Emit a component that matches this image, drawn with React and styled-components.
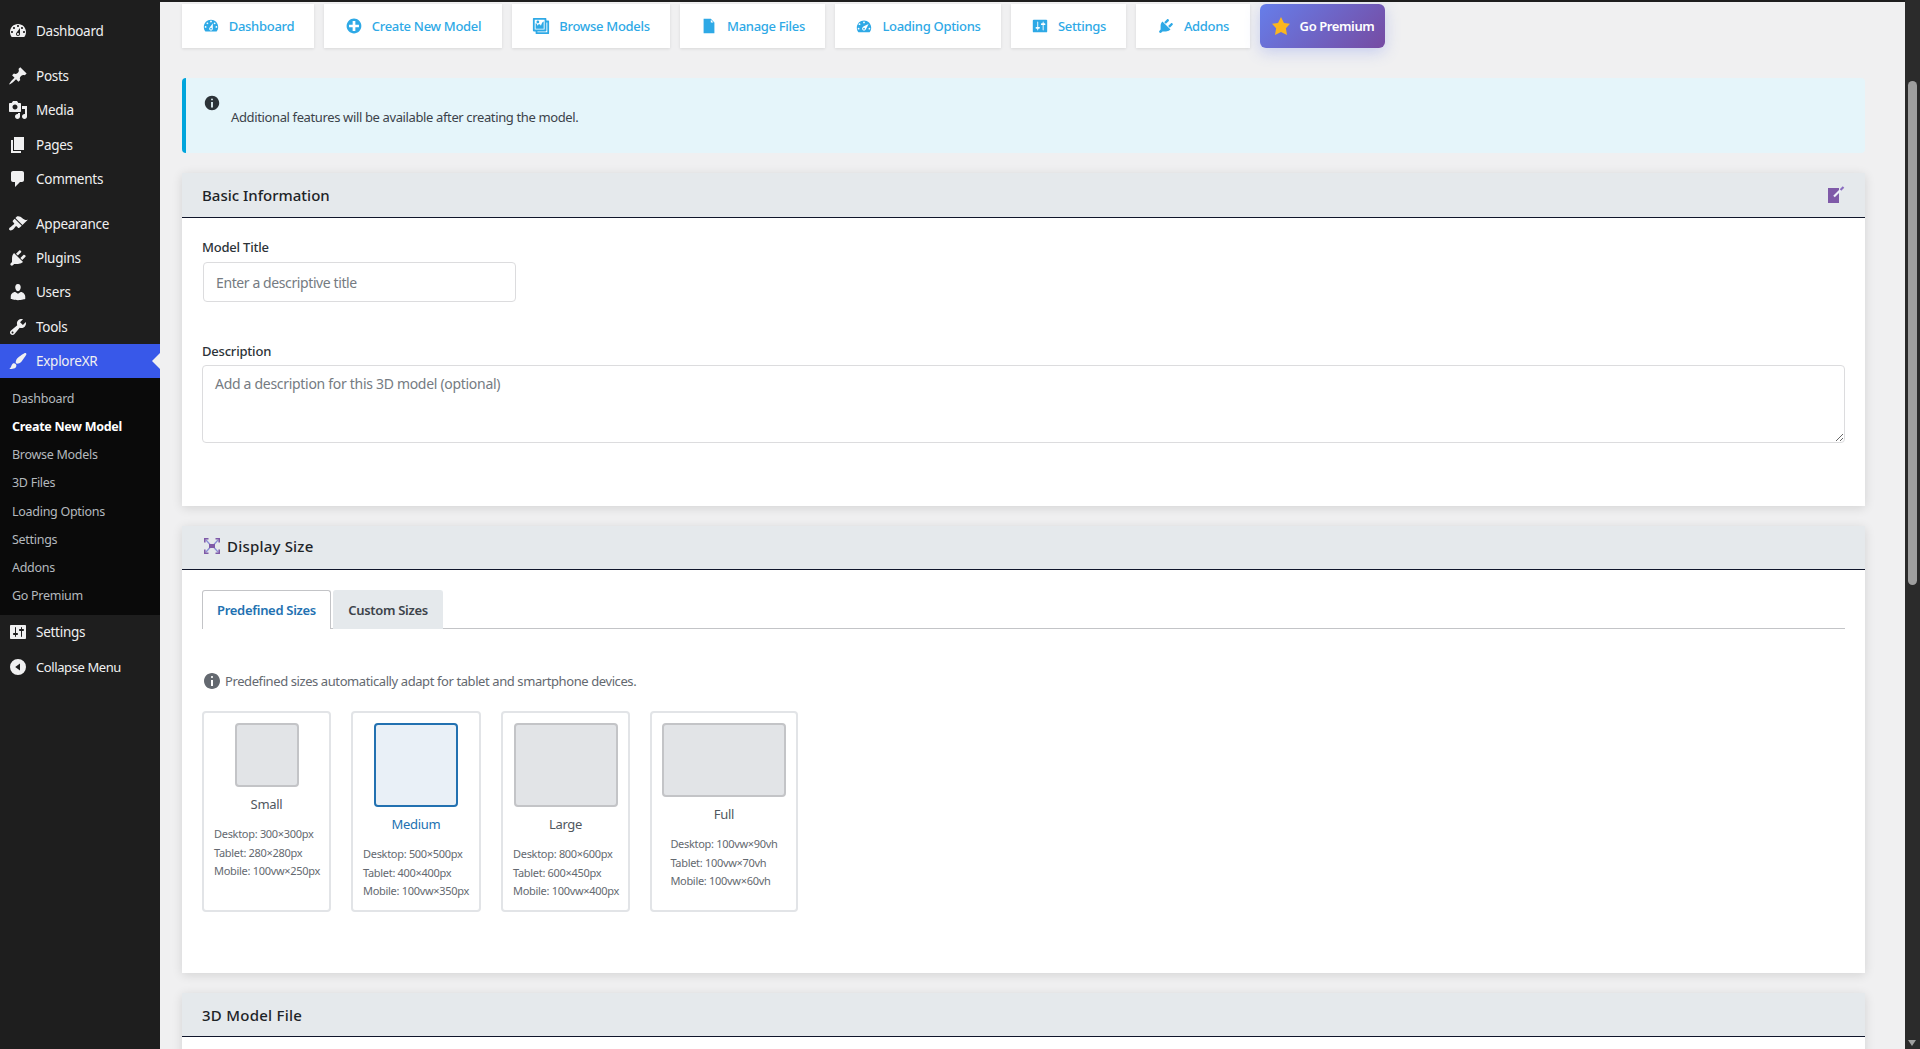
import styled, { createGlobalStyle } from 'styled-components'

const Global = createGlobalStyle`
    html, body {
        margin: 0;
        padding: 0;
        height: 100%;
        overflow: hidden;
        background: #f0f0f1;
    }

    * {
        box-sizing: border-box;
    }

    body {
        font-family: "Noto Sans", "Open Sans", sans-serif;
        font-size: 13px;
        color: #3c434a;
    }
`

/* dashicons, drawn on a 20x20 box */
const paths = {
    dashboard: 'M3.76 16h12.48c1.1-1.37 1.76-3.11 1.76-5 0-4.42-3.58-8-8-8s-8 3.58-8 8c0 1.89.66 3.63 1.76 5zM10 4c.55 0 1 .45 1 1s-.45 1-1 1-1-.45-1-1 .45-1 1-1zM6 6c.55 0 1 .45 1 1s-.45 1-1 1-1-.45-1-1 .45-1 1-1zm8 0c.55 0 1 .45 1 1s-.45 1-1 1-1-.45-1-1 .45-1 1-1zm-5.37 5.55L12 7v6c0 1.1-.9 2-2 2s-2-.9-2-2c0-.57.24-1.08.63-1.45zM4 10c.55 0 1 .45 1 1s-.45 1-1 1-1-.45-1-1 .45-1 1-1zm12 0c.55 0 1 .45 1 1s-.45 1-1 1-1-.45-1-1 .45-1 1-1zm-5 3c0-.55-.45-1-1-1s-1 .45-1 1 .45 1 1 1 1-.45 1-1z',
    post: 'M10.44 3.02l1.82-1.82 6.36 6.35-1.83 1.82c-1.05-.68-2.48-.57-3.41.36l-.75.75c-.92.93-1.04 2.35-.35 3.41l-1.83 1.82-2.41-2.41-2.8 2.79c-.42.42-3.38 2.71-3.8 2.29s1.86-3.39 2.28-3.81l2.79-2.79L4.1 9.36l1.83-1.82c1.05.69 2.48.57 3.4-.36l.75-.75c.93-.92 1.05-2.35.36-3.41z',
    media: 'M13 11V4c0-.55-.45-1-1-1h-1.67L9 1H5L3.67 3H2c-.55 0-1 .45-1 1v7c0 .55.45 1 1 1h10c.55 0 1-.45 1-1zM7 4.5c1.38 0 2.5 1.12 2.5 2.5S8.38 9.5 7 9.5 4.5 8.38 4.5 7 5.62 4.5 7 4.5zM14 6h5v10.5c0 1.38-1.12 2.5-2.5 2.5S14 17.88 14 16.5s1.12-2.5 2.5-2.5c.17 0 .34.02.5.05V9h-3V6zm-4 8.05V13h2v3.5c0 1.38-1.12 2.5-2.5 2.5S7 17.88 7 16.5 8.12 14 9.5 14c.17 0 .34.02.5.05z',
    page: 'M6 15V2h10v13H6zm-1 1h8v2H3V5h2v11z',
    comments: 'M5 2h9c1.1 0 2 .9 2 2v7c0 1.1-.9 2-2 2h-2l-5 5v-5H5c-1.1 0-2-.9-2-2V4c0-1.1.9-2 2-2z',
    appearance: 'M14.48 11.06L7.41 3.99l1.5-1.5c.5-.56 2.3-.47 3.51.32 1.21.8 1.43 1.28 2.91 2.1 1.18.64 2.45 1.26 4.45.85zm-.71.71L6.7 4.7 4.93 6.47c-.39.39-.39 1.02 0 1.41l1.06 1.06c.39.39.39 1.03 0 1.42-.6.6-1.43 1.11-2.21 1.69-.35.26-.7.53-1.01.84C1.43 13.23.4 14.99 1.5 16.09s2.86.07 4.3-1.28c.8-.77 1.2-1.6 1.7-2.2.4-.4 1.03-.39 1.42 0l1.06 1.06c.39.39 1.02.39 1.41 0z',
    plugins: 'M13.11 4.36L9.87 7.6 8 5.73l3.24-3.24c.35-.34 1.05-.2 1.56.32.52.51.66 1.21.31 1.55zm-8 1.77l.91-1.12 9.01 9.01-1.19.84c-.71.71-2.63 1.16-3.82 1.16H6.14L4.9 17.26c-.59.59-1.54.59-2.12 0-.59-.58-.59-1.53 0-2.12l1.24-1.24v-3.88c0-1.13.4-3.19 1.09-3.89zm7.26 3.97l3.24-3.24c.34-.35 1.04-.21 1.55.31.52.51.66 1.21.31 1.55l-3.24 3.25z',
    users: 'M10 9.25c-2.27 0-2.73-3.44-2.73-3.44C7 4.02 7.82 2 9.97 2c2.16 0 2.98 2.02 2.71 3.81 0 0-.41 3.44-2.68 3.44zm0 2.57L12.72 10c2.39 0 4.52 2.33 4.52 4.53v2.49s-3.65 1.13-7.24 1.13c-3.65 0-7.24-1.13-7.24-1.13v-2.49c0-2.25 1.94-4.48 4.47-4.48z',
    tools: 'M16.68 9.77c-1.34 1.34-3.3 1.67-4.95.99l-5.41 6.52c-.99.99-2.59.99-3.58 0s-.99-2.59 0-3.57l6.52-5.42c-.68-1.65-.35-3.61.99-4.95 1.28-1.28 3.12-1.62 4.72-1.06l-2.89 2.89 2.82 2.82 2.86-2.87c.53 1.58.18 3.39-1.08 4.65zM3.81 16.21c.4.39 1.04.39 1.43 0 .4-.4.4-1.04 0-1.43-.39-.4-1.03-.4-1.43 0-.39.39-.39 1.03 0 1.43z',
    brush: 'M18.33 3.57s.27-.8-.31-1.36c-.53-.52-1.22-.24-1.22-.24-.61.3-5.76 3.47-7.67 5.57-.86.96-2.06 3.79-1.09 4.82.92.98 3.96-.17 4.79-1 2.06-2.06 5.21-7.17 5.5-7.79zM1.4 17.65c2.37-1.56 1.46-3.41 3.23-4.85.93-.75 2.3-.62 3.12.29.97 1.08.8 2.7-.23 3.63-1.14 1.03-4.12 1.53-6.12.93z',
    settings: 'M18 16V4c0-.55-.45-1-1-1H3c-.55 0-1 .45-1 1v12c0 .55.45 1 1 1h14c.55 0 1-.45 1-1zM8 11h1c.55 0 1 .45 1 1s-.45 1-1 1H8v1.5c0 .28-.22.5-.5.5s-.5-.22-.5-.5V13H6c-.55 0-1-.45-1-1s.45-1 1-1h1V5.5c0-.28.22-.5.5-.5s.5.22.5.5V11zm5-2h-1c-.55 0-1-.45-1-1s.45-1 1-1h1V5.5c0-.28.22-.5.5-.5s.5.22.5.5V7h1c.55 0 1 .45 1 1s-.45 1-1 1h-1v5.5c0 .28-.22.5-.5.5s-.5-.22-.5-.5V9z',
    collapse: 'M10 20a10 10 0 1 1 0-20 10 10 0 0 1 0 20zm2.5-14.5L6.5 10l6 4.5z',
    plus: 'M15.8 4.2c3.2 3.21 3.2 8.39 0 11.6-3.21 3.2-8.39 3.2-11.6 0C1 12.59 1 7.41 4.2 4.2 7.41 1 12.59 1 15.8 4.2zm-4.3 11.3v-4h4v-3h-4v-4h-3v4h-4v3h4v4h3z',
    gallery: 'M16 4h1.96c.57 0 1.04.47 1.04 1.04v12.92c0 .57-.47 1.04-1.04 1.04H5.04C4.47 19 4 18.53 4 17.96V16H2.04C1.47 16 1 15.53 1 14.96V2.04C1 1.47 1.47 1 2.04 1h12.92c.57 0 1.04.47 1.04 1.04V4zM3 14h11V3H3v11zm5-8.5C8 4.67 7.33 4 6.5 4S5 4.67 5 5.5 5.67 7 6.5 7 8 6.33 8 5.5zm2 4.5s1-5 3-5v8H4V7c2 0 2 3 2 3s.33-2 2-2 2 2 2 2zm7 7V6h-1v8.96c0 .57-.47 1.04-1.04 1.04H6v1h11z',
    file: 'M12 2l4 4v12H4V2h8zm0 4h3l-3-3v3z',
    performance: 'M3.76 17.01h12.48C17.34 15.63 18 13.9 18 12c0-4.41-3.58-8-8-8s-8 3.59-8 8c0 1.9.66 3.63 1.76 5.01zM9 6c0-.55.45-1 1-1s1 .45 1 1c0 .56-.45 1-1 1s-1-.44-1-1zM4 8c0-.55.45-1 1-1s1 .45 1 1c0 .56-.45 1-1 1s-1-.44-1-1zm4.52 3.4c.84-.83 6.51-3.5 6.51-3.5s-2.66 5.68-3.49 6.51c-.84.84-2.18.84-3.02 0-.83-.83-.83-2.18 0-3.01zM3 13c0-.55.45-1 1-1s1 .45 1 1c0 .56-.45 1-1 1s-1-.44-1-1zm6 0c0-.55.45-1 1-1s1 .45 1 1c0 .56-.45 1-1 1s-1-.44-1-1zm6 0c0-.55.45-1 1-1s1 .45 1 1c0 .56-.45 1-1 1s-1-.44-1-1z',
    info: 'M10 2c4.42 0 8 3.58 8 8s-3.58 8-8 8-8-3.58-8-8 3.58-8 8-8zm1 4c0-.55-.45-1-1-1s-1 .45-1 1 .45 1 1 1 1-.45 1-1zm0 9V9H9v6h2z',
    star: 'M10 1l3 6 6 .75-4.12 4.62L16 19l-6-3-6 3 1.13-6.63L1 7.75 7 7z',
}

function Dash({ name, size = 20, color = 'currentColor' }) {
    return (
        <svg width={size} height={size} viewBox='0 0 20 20' fill={color} fillRule='evenodd' style={{ flexShrink: 0 }}>
            <path d={paths[name]} />
        </svg>
    )
}

function ExpandIcon() {
    return (
        <svg width='16' height='16' viewBox='0 0 16 16' style={{ flexShrink: 0, marginLeft: 2 }}>
            <path d='M2 2l4 4.5M14 2l-4 4.5M2 14l4-4.5M14 14l-4-4.5' stroke='#8d8fd6' strokeWidth='1.3' />
            <path d='M0 0h4.5v1.6H1.6v2.9H0zM16 0h-4.5v1.6h2.9v2.9H16zM0 16h4.5v-1.6H1.6v-2.9H0zM16 16h-4.5v-1.6h2.9v-2.9H16zM5 6h6v4H5z' fill='#7f5aa8' />
        </svg>
    )
}

function EditIcon() {
    return (
        <svg width='18' height='18' viewBox='0 0 18 18'>
            <rect x='1' y='2' width='11' height='15' fill='#7f5aa8' />
            <path d='M7 10.5l6.5-6.5' stroke='#eef0fa' strokeWidth='2.2' />
            <path d='M13.5 4l3-3' stroke='#8a6cc0' strokeWidth='2.2' />
        </svg>
    )
}

const Page = styled.div`
    display: flex;
    height: 100vh;
    overflow: hidden;
`

/* left admin menu */
const Sidebar = styled.nav`
    width: 160px;
    flex-shrink: 0;
    padding-top: 14px;
    background: #1e1e1e;
`

const MenuItem = styled.div`
    position: relative;
    display: flex;
    align-items: center;
    height: ${({ $active }) => ($active ? '34px' : '34.2px')};
    margin-top: ${({ $sep }) => ($sep ? '11px' : '0')};
    padding-left: 8px;
    gap: 8px;
    font-size: 13.5px;
    letter-spacing: -0.27px;
    color: #f0f0f1;
    background: ${({ $active }) => ($active ? '#3858e9' : 'transparent')};

    ${({ $active }) => $active && `
        &::after {
            content: '';
            position: absolute;
            right: 0;
            top: 9px;
            border: 8px solid transparent;
            border-left: 0;
            border-right-color: #f0f0f1;
        }
    `}
`

const CollapseItem = styled(MenuItem)`
    margin-top: 1px;
    font-size: 13px;
    letter-spacing: -0.4px;
`

const IconSlot = styled.span`
    display: flex;
    align-items: center;
    justify-content: center;
    width: 20px;
    height: 20px;
    flex-shrink: 0;
`

const SubMenu = styled.div`
    padding: 6.5px 0 5px;
    background: #0a0a0a;
`

const SubItem = styled.div`
    display: flex;
    align-items: center;
    height: 28.2px;
    padding-left: 12px;
    font-size: 12.5px;
    letter-spacing: -0.28px;
    color: ${({ $current }) => ($current ? '#fff' : '#b4b9be')};
    font-weight: ${({ $current }) => ($current ? 700 : 400)};
`

/* content column */
const Main = styled.main`
    flex: 1;
    min-width: 0;
    padding: 2px 40px 0 22px;
    border-top: 2px solid #1e1e1e;
    overflow: hidden;
    background: #f0f0f1;
`

const TabBar = styled.div`
    display: flex;
    gap: 10px;
`

const TopTab = styled.a`
    display: flex;
    align-items: center;
    justify-content: center;
    gap: 9px;
    width: ${({ $w }) => $w}px;
    height: 44px;
    font-size: 13px;
    font-weight: 500;
    letter-spacing: -0.3px;
    color: #2ea9e6;
    background: #fff;
    box-shadow: 0 1px 3px rgba(0, 0, 0, 0.1);
`

const PremiumTab = styled(TopTab)`
    color: #fff;
    font-weight: 600;
    letter-spacing: -0.4px;
    border-radius: 6px;
    background: linear-gradient(135deg, #667eea, #764ba2);
    box-shadow: 0 4px 15px rgba(102, 126, 234, 0.3);
`

const Notice = styled.div`
    height: 75px;
    margin-top: 30px;
    padding: 16px 17px;
    color: #3c434a;
    background: #e5f5fa;
    border-left: 4px solid #00a5dc;
    border-radius: 4px;
`

const NoticeIcon = styled.div`
    display: block;
    height: 16px;
    color: #2c3338;
`

const NoticeText = styled.p`
    margin: -2px 0 0 28px;
    font-size: 13px;
    line-height: 18px;
    letter-spacing: -0.37px;
`

const Card = styled.section`
    margin-top: 20px;
    background: #fff;
    box-shadow: 0 2px 10px rgba(0, 0, 0, 0.12);
`

const CardHeader = styled.header`
    display: flex;
    align-items: center;
    justify-content: space-between;
    height: ${({ $h }) => $h || 44}px;
    padding: 0 20px;
    background: #e5e9ec;
    border-bottom: 1px solid #10162b;
`

const CardTitle = styled.h2`
    display: flex;
    align-items: center;
    gap: 6px;
    margin: 0;
    font-size: 15px;
    font-weight: 500;
    letter-spacing: ${({ $ls }) => $ls || 0}px;
    color: #1d2327;
`

const DisplayTitle = styled(CardTitle)`
    gap: 7px;
    margin-bottom: 3px;
`

const CardBody = styled.div`
    padding: 20px;
`

const Field = styled.div`
    margin-bottom: ${({ $mb }) => $mb}px;
`

const Label = styled.label`
    display: block;
    margin-bottom: ${({ $mb }) => $mb}px;
    font-size: 13px;
    line-height: 18px;
    font-weight: 500;
    letter-spacing: -0.2px;
    color: #2c3338;
`

const TextInput = styled.input`
    display: block;
    width: 313px;
    height: 40px;
    margin-left: 1px;
    padding: 0 12px;
    font: inherit;
    font-size: 14px;
    letter-spacing: -0.4px;
    background: #fff;
    border: 1px solid #dcdcde;
    border-radius: 4px;

    &::placeholder {
        color: #757b82;
        opacity: 1;
    }
`

const TextArea = styled.textarea`
    display: block;
    width: 100%;
    height: 78px;
    padding: 8px 12px;
    font: inherit;
    font-size: 14px;
    letter-spacing: -0.3px;
    background: #fff;
    border: 1px solid #dcdcde;
    border-radius: 4px;
    resize: vertical;

    &::placeholder {
        color: #757b82;
        opacity: 1;
    }
`

const SizeTabs = styled.div`
    display: flex;
    gap: 2px;
    height: 39px;
    border-bottom: 1px solid #c3c4c7;
`

const SizeTab = styled.button`
    width: ${({ $w }) => $w}px;
    height: 39px;
    padding: 0;
    font: inherit;
    font-size: 13px;
    font-weight: 600;
    letter-spacing: -0.3px;
    color: ${({ $on }) => ($on ? '#2271b1' : '#3c434a')};
    background: ${({ $on }) => ($on ? '#fff' : '#e5e9ec')};
    border: 1px solid ${({ $on }) => ($on ? '#c3c4c7' : '#e5e9ec')};
    border-bottom: 0;
    border-radius: 3px 3px 0 0;
`

const Hint = styled.p`
    display: flex;
    align-items: center;
    gap: 3px;
    height: 18px;
    margin: 43px 0 21px 0;
    font-size: 13px;
    letter-spacing: -0.41px;
    color: #646970;
`

const SizeRow = styled.div`
    display: flex;
    gap: 20px;
    margin-bottom: 41px;
`

const SizeCard = styled.div`
    width: ${({ $w }) => $w}px;
    height: 201px;
    padding: 10px 10px;
    text-align: center;
    background: #fff;
    border: 2px solid #e2e4e7;
    border-radius: 4px;
`

const Preview = styled.div`
    width: ${({ $w }) => $w}px;
    height: ${({ $h }) => $h}px;
    margin: 0 auto;
    background: ${({ $on }) => ($on ? '#e9f0f7' : '#e2e4e7')};
    border: 2px solid ${({ $on }) => ($on ? '#2271b1' : '#c3c4c7')};
    border-radius: 4px;
`

const SizeName = styled.div`
    margin-top: 8px;
    font-size: 13px;
    line-height: 18px;
    letter-spacing: -0.3px;
    color: ${({ $on }) => ($on ? '#2271b1' : '#50575e')};
`

const Specs = styled.div`
    display: inline-block;
    margin-top: 12px;
    font-size: 11px;
    line-height: 18.5px;
    letter-spacing: -0.3px;
    text-align: left;
    white-space: nowrap;
    color: #646970;
`

/* fake window scrollbar, part of the picture */
const ScrollTrack = styled.div`
    position: relative;
    width: 15px;
    flex-shrink: 0;
    padding: 81px 3px 0;
    background: #2b2b2b;
`

const ScrollThumb = styled.div`
    width: 9px;
    height: 504px;
    background: #9f9f9f;
    border-radius: 5px;
`

const ScrollArrow = styled.div`
    position: absolute;
    left: 3px;
    bottom: 3px;
    border-style: solid;
    border-width: 6px 4.5px 0;
    border-color: #9f9f9f transparent transparent;
`

const menuTop = [
    { icon: 'dashboard', label: 'Dashboard' },
    { icon: 'post', label: 'Posts', sep: true },
    { icon: 'media', label: 'Media' },
    { icon: 'page', label: 'Pages' },
    { icon: 'comments', label: 'Comments' },
    { icon: 'appearance', label: 'Appearance', sep: true },
    { icon: 'plugins', label: 'Plugins' },
    { icon: 'users', label: 'Users' },
    { icon: 'tools', label: 'Tools' },
]

const subItems = ['Dashboard', 'Create New Model', 'Browse Models', '3D Files', 'Loading Options', 'Settings', 'Addons', 'Go Premium']

const topTabs = [
    { icon: 'dashboard', label: 'Dashboard', w: 132 },
    { icon: 'plus', label: 'Create New Model', w: 178 },
    { icon: 'gallery', label: 'Browse Models', w: 158 },
    { icon: 'file', label: 'Manage Files', w: 145 },
    { icon: 'performance', label: 'Loading Options', w: 166 },
    { icon: 'settings', label: 'Settings', w: 115 },
    { icon: 'plugins', label: 'Addons', w: 114 },
]

const sizes = [
    { name: 'Small', w: 129, pw: 64, ph: 64, specs: ['Desktop: 300×300px', 'Tablet: 280×280px', 'Mobile: 100vw×250px'] },
    { name: 'Medium', w: 130, pw: 84, ph: 84, on: true, specs: ['Desktop: 500×500px', 'Tablet: 400×400px', 'Mobile: 100vw×350px'] },
    { name: 'Large', w: 129, pw: 104, ph: 84, specs: ['Desktop: 800×600px', 'Tablet: 600×450px', 'Mobile: 100vw×400px'] },
    { name: 'Full', w: 148, pw: 124, ph: 74, specs: ['Desktop: 100vw×90vh', 'Tablet: 100vw×70vh', 'Mobile: 100vw×60vh'] },
]

export default function App() {
    return (
        <Page>
            <Global />
            <Sidebar>
                {menuTop.map((item) => (
                    <MenuItem key={item.label} $sep={item.sep}>
                        <IconSlot><Dash name={item.icon} /></IconSlot>
                        {item.label}
                    </MenuItem>
                ))}
                <MenuItem $active>
                    <IconSlot><Dash name='brush' /></IconSlot>
                    ExploreXR
                </MenuItem>
                <SubMenu>
                    {subItems.map((label, i) => (
                        <SubItem key={label} $current={i === 1}>{label}</SubItem>
                    ))}
                </SubMenu>
                <MenuItem>
                    <IconSlot><Dash name='settings' /></IconSlot>
                    Settings
                </MenuItem>
                <CollapseItem>
                    <IconSlot><Dash name='collapse' size={16} /></IconSlot>
                    Collapse Menu
                </CollapseItem>
            </Sidebar>

            <Main>
                <TabBar>
                    {topTabs.map((tab) => (
                        <TopTab key={tab.label} $w={tab.w}>
                            <Dash name={tab.icon} size={18} />
                            {tab.label}
                        </TopTab>
                    ))}
                    <PremiumTab $w={125}>
                        <Dash name='star' size={20} color='#fbb61e' />
                        Go Premium
                    </PremiumTab>
                </TabBar>

                <Notice>
                    <NoticeIcon><Dash name='info' size={18} /></NoticeIcon>
                    <NoticeText>Additional features will be available after creating the model.</NoticeText>
                </Notice>

                <Card>
                    <CardHeader $h={45}>
                        <CardTitle>Basic Information</CardTitle>
                        <EditIcon />
                    </CardHeader>
                    <CardBody>
                        <Field $mb={40}>
                            <Label $mb={6}>Model Title</Label>
                            <TextInput placeholder='Enter a descriptive title' />
                        </Field>
                        <Field $mb={43}>
                            <Label $mb={5}>Description</Label>
                            <TextArea placeholder='Add a description for this 3D model (optional)' />
                        </Field>
                    </CardBody>
                </Card>

                <Card>
                    <CardHeader>
                        <DisplayTitle $ls={0.2}><ExpandIcon />Display Size</DisplayTitle>
                    </CardHeader>
                    <CardBody>
                        <SizeTabs>
                            <SizeTab $on $w={129}>Predefined Sizes</SizeTab>
                            <SizeTab $w={110}>Custom Sizes</SizeTab>
                        </SizeTabs>
                        <Hint>
                            <Dash name='info' size={20} color='#646970' />
                            Predefined sizes automatically adapt for tablet and smartphone devices.
                        </Hint>
                        <SizeRow>
                            {sizes.map((size) => (
                                <SizeCard key={size.name} $w={size.w}>
                                    <Preview $w={size.pw} $h={size.ph} $on={size.on} />
                                    <SizeName $on={size.on}>{size.name}</SizeName>
                                    <Specs>
                                        {size.specs.map((line) => <div key={line}>{line}</div>)}
                                    </Specs>
                                </SizeCard>
                            ))}
                        </SizeRow>
                    </CardBody>
                </Card>

                <Card>
                    <CardHeader>
                        <CardTitle $ls={0.25}>3D Model File</CardTitle>
                    </CardHeader>
                    <CardBody />
                </Card>
            </Main>

            <ScrollTrack>
                <ScrollThumb />
                <ScrollArrow />
            </ScrollTrack>
        </Page>
    )
}
